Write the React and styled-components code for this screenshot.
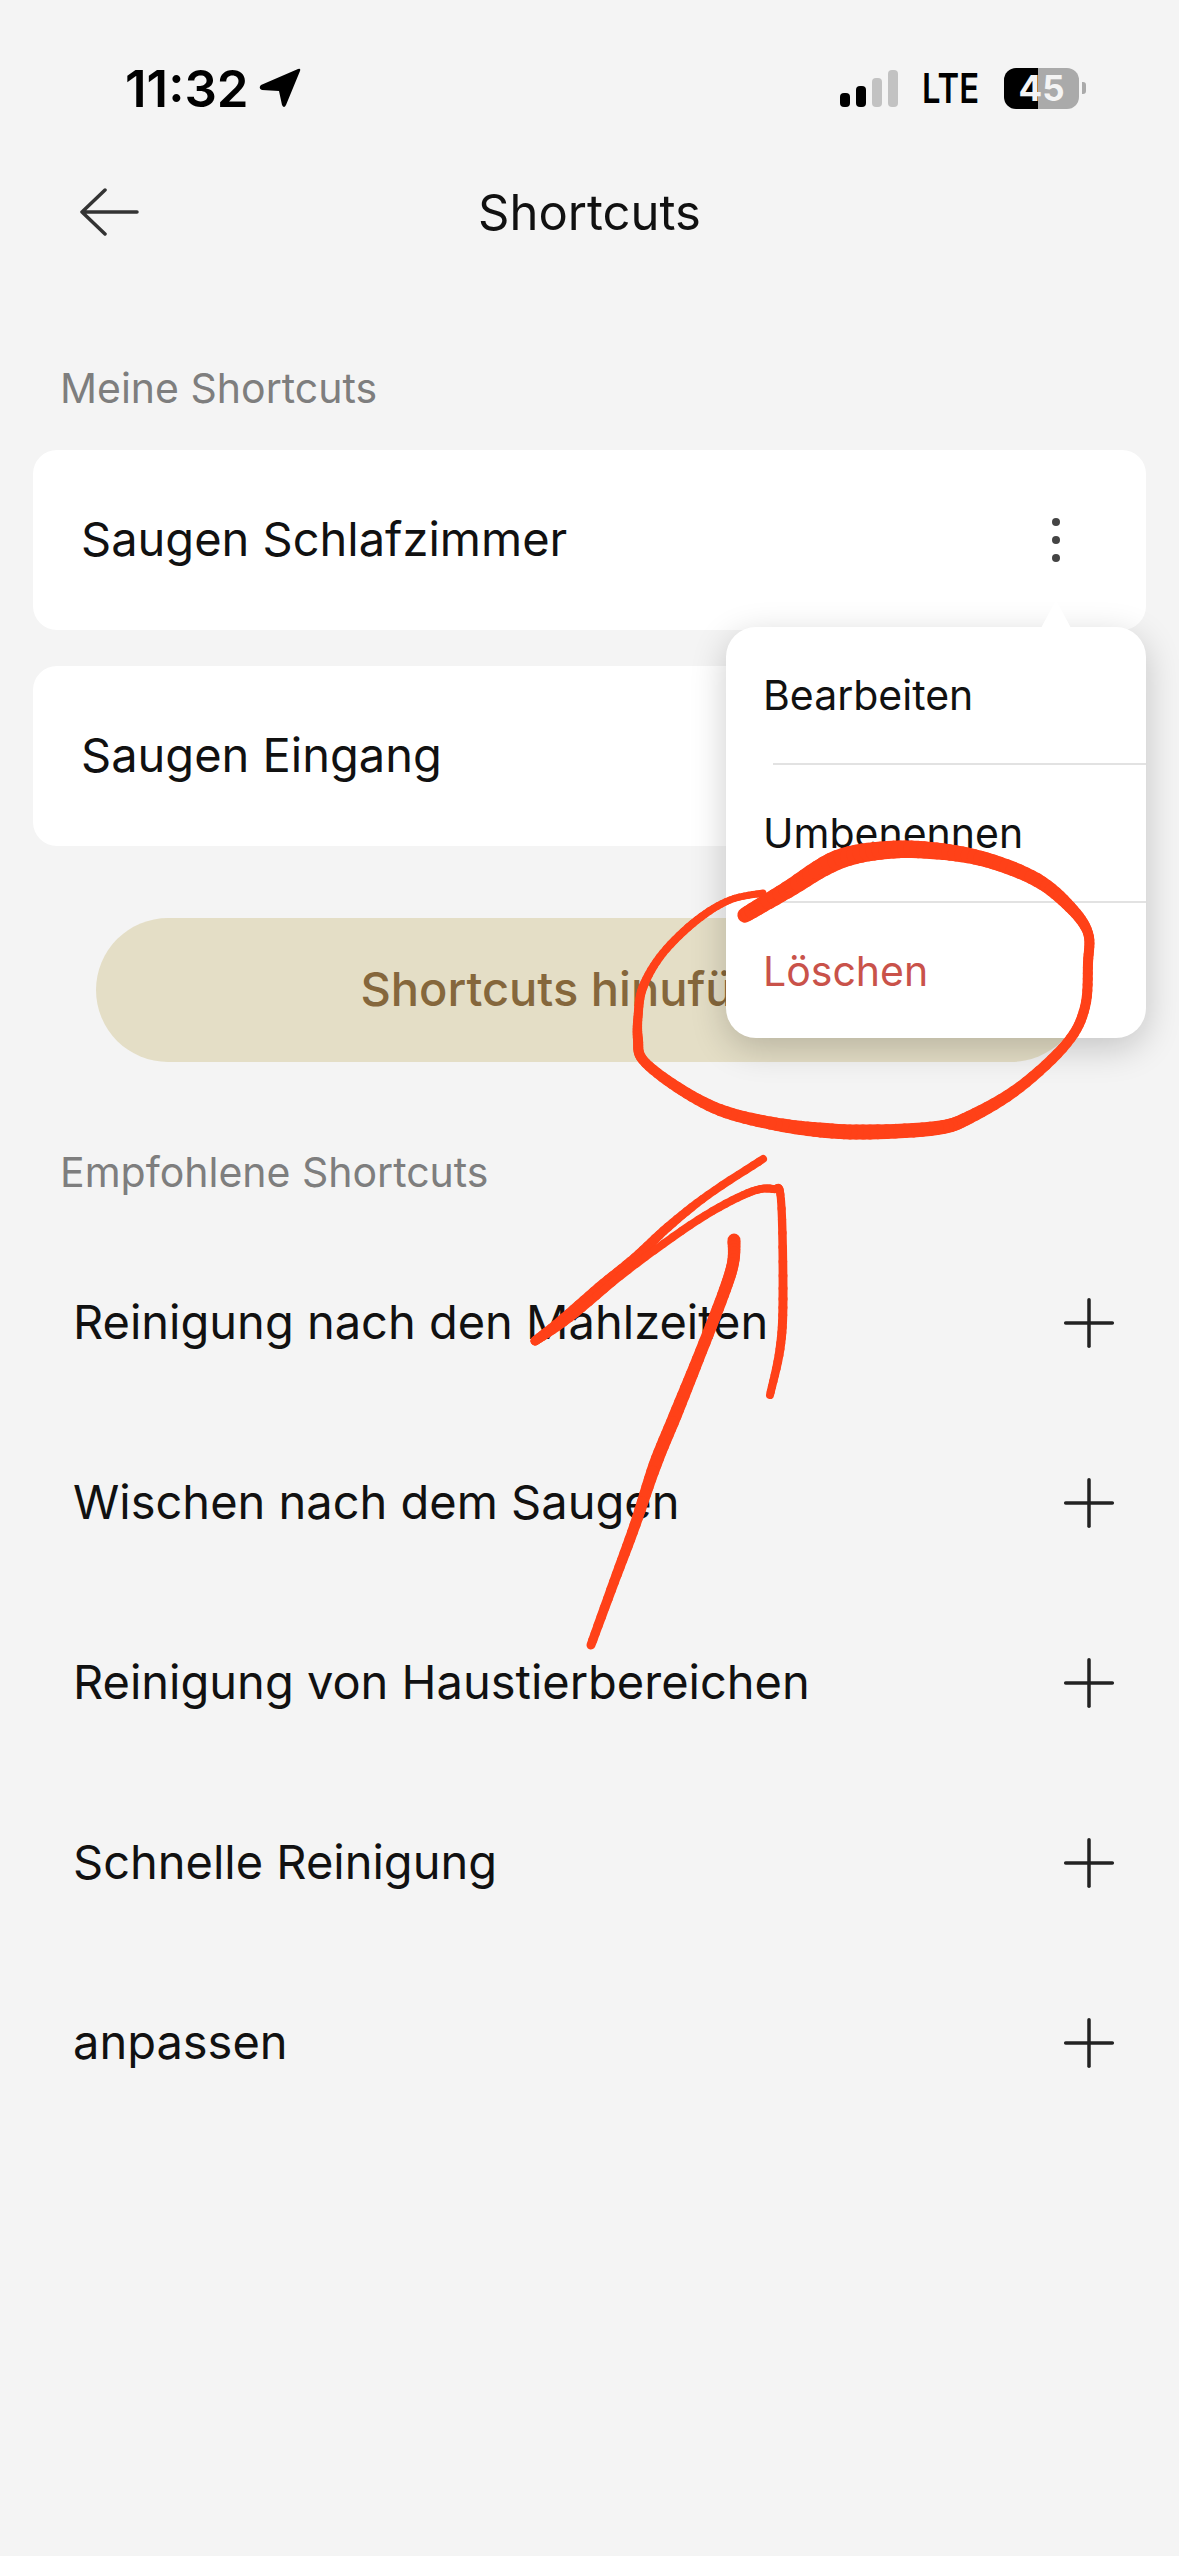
import React from 'react';
import styled, { createGlobalStyle } from 'styled-components';
import { Plus } from 'lucide-react';

const GlobalStyle = createGlobalStyle`
  html, body {
    margin: 0;
    padding: 0;
    background: #f4f4f4;
  }
  * {
    box-sizing: border-box;
  }
`;

const Page = styled.div`
  position: relative;
  width: 1179px;
  height: 2556px;
  overflow: hidden;
  background: #f4f4f4;
  font-family: Inter, 'Noto Sans', sans-serif;
  color: #111;
`;

const StatusBar = styled.div`
  display: flex;
  justify-content: space-between;
  align-items: center;
  height: 88px;
  margin-top: 44px;
  padding: 0 93px 0 125px;
`;

const StatusLeft = styled.div`
  display: flex;
  align-items: center;
  gap: 10px;
`;

const Time = styled.span`
  font-size: 51px;
  font-weight: 600;
  color: #000;
`;

const StatusRight = styled.div`
  display: flex;
  align-items: center;
`;

const Signal = styled.div`
  display: flex;
  align-items: flex-end;
  gap: 6px;
  height: 37px;
  margin-right: 24px;
`;

const SignalBar = styled.span`
  width: 10px;
  height: ${({ $h }) => $h}px;
  border-radius: 4px;
  background: ${({ $on }) => ($on ? '#000' : '#c2c2c2')};
`;

const Lte = styled.span`
  display: inline-block;
  width: 58px;
  margin-right: 24px;
  font-size: 41px;
  font-weight: 600;
  color: #000;
  transform: scaleX(0.8);
  transform-origin: left center;
`;

const Battery = styled.div`
  display: flex;
  align-items: center;
  justify-content: center;
  width: 75px;
  height: 41px;
  border-radius: 12px;
  overflow: hidden;
  background: linear-gradient(90deg, #000 0 34px, #aaa 34px);
  font-size: 35px;
  font-weight: 700;
  color: #f4f4f4;
`;

const BatteryNub = styled.span`
  width: 4px;
  height: 12px;
  margin-left: 3px;
  border-radius: 0 3px 3px 0;
  background: #aaa;
`;

const Header = styled.header`
  display: flex;
  align-items: center;
  justify-content: center;
  position: relative;
  height: 96px;
  margin-top: 32px;
`;

const BackButton = styled.div`
  position: absolute;
  left: 79px;
  top: 24px;
  display: flex;
`;

const Title = styled.h1`
  margin: 0;
  font-size: 49px;
  font-weight: 400;
  color: #111;
`;

const SectionLabel = styled.div`
  height: 50px;
  margin-top: ${({ $top }) => $top || 0}px;
  padding-left: 60px;
  font-size: 41px;
  line-height: 48px;
  color: #7e7e7e;
`;

const Cards = styled.div`
  display: flex;
  flex-direction: column;
  gap: 36px;
  margin: 36px 33px 0;
`;

const Card = styled.div`
  display: flex;
  align-items: center;
  justify-content: space-between;
  height: 180px;
  padding: 0 48px 3px;
  border-radius: 24px;
  background: #fff;
  font-size: 47px;
`;

const Kebab = styled.div`
  display: flex;
  flex-direction: column;
  gap: 10px;
  margin: 3px 38px 0 0;
`;

const KebabDot = styled.span`
  width: 8px;
  height: 8px;
  border-radius: 50%;
  background: #444;
`;

const AddButton = styled.div`
  display: flex;
  align-items: center;
  justify-content: center;
  height: 144px;
  margin: 72px 96px 0;
  padding-bottom: 3px;
  border-radius: 72px;
  background: #e4dec6;
  font-size: 47px;
  font-weight: 500;
  color: #85673c;
`;

const Recommended = styled.div`
  margin-top: 86px;
`;

const RowList = styled.div`
  display: flex;
  flex-direction: column;
  margin-top: 35px;
`;

const Row = styled.div`
  display: flex;
  align-items: center;
  justify-content: space-between;
  height: 180px;
  padding: 0 50px 0 73px;
  font-size: 47px;
  color: #111;
`;

const RowName = styled.span`
  margin-bottom: 3px;
`;

const Menu = styled.div`
  position: absolute;
  top: 627px;
  right: 33px;
  width: 420px;
  height: 411px;
  border-radius: 30px;
  background: #fff;
  box-shadow: 0 10px 36px rgba(0, 0, 0, 0.2);

  &::before {
    content: '';
    position: absolute;
    top: -27px;
    right: 75px;
    border-left: 15px solid transparent;
    border-right: 15px solid transparent;
    border-bottom: 28px solid #fff;
  }
`;

const MenuItem = styled.div`
  display: flex;
  align-items: center;
  height: ${({ $h }) => $h}px;
  padding-left: 37px;
  font-size: 41px;
  color: ${({ $danger }) => ($danger ? '#c9524a' : '#111')};
`;

const MenuDivider = styled.div`
  height: 2px;
  margin-left: 47px;
  background: #e2e2e2;
`;

const Scribble = styled.svg`
  position: absolute;
  top: 0;
  left: 0;
  pointer-events: none;
`;

const recommended = [
  'Reinigung nach den Mahlzeiten',
  'Wischen nach dem Saugen',
  'Reinigung von Haustierbereichen',
  'Schnelle Reinigung',
  'anpassen',
];

// pen strokes as [x, y, width]
const circleStroke = [
  [745, 915, 15], [787, 890, 17], [837, 860, 20], [887, 850, 18], [937, 851, 17],
  [987, 860, 15], [1037, 880, 14], [1070, 907, 12], [1088, 933, 10], [1088, 963, 10],
  [1085, 1007, 10], [1067, 1043, 10], [1020, 1087, 11], [970, 1117, 13], [937, 1128, 14],
  [870, 1132, 15], [820, 1130, 15], [770, 1123, 13], [720, 1110, 12], [677, 1087, 11],
  [643, 1060, 10], [638, 1040, 10], [638, 1017, 9], [643, 987, 9], [663, 953, 8],
  [697, 920, 8], [730, 900, 7], [763, 893, 7],
];

const arrowHead = [
  [763, 1159, 8], [708, 1195, 8], [668, 1227, 9], [635, 1258, 10], [599, 1288, 11],
  [560, 1322, 11], [535, 1341, 9], [570, 1318, 8], [628, 1270, 8], [698, 1220, 8],
  [748, 1193, 8], [773, 1189, 8], [781, 1200, 8], [783, 1299, 9], [780, 1349, 9],
  [770, 1395, 8],
];

const arrowShaft = [
  [734, 1240, 13], [733, 1263, 12], [723, 1295, 12], [698, 1359, 12], [675, 1416, 13],
  [655, 1465, 13], [635, 1525, 11], [614, 1582, 10], [591, 1645, 9],
];

// Catmull-Rom through the points, one short round-capped line per step,
// so that the pen width can change along the stroke
function samplePen(points, steps = 8) {
  const out = [];
  for (let i = 0; i < points.length - 1; i++) {
    const p0 = points[Math.max(i - 1, 0)];
    const p1 = points[i];
    const p2 = points[i + 1];
    const p3 = points[Math.min(i + 2, points.length - 1)];
    for (let s = 0; s < steps; s++) {
      const t = s / steps;
      const at = (k) =>
        0.5 *
        (2 * p1[k] +
          (p2[k] - p0[k]) * t +
          (2 * p0[k] - 5 * p1[k] + 4 * p2[k] - p3[k]) * t * t +
          (3 * p1[k] - p0[k] - 3 * p2[k] + p3[k]) * t * t * t);
      out.push([at(0), at(1), p1[2] + (p2[2] - p1[2]) * t]);
    }
  }
  out.push(points[points.length - 1]);
  return out;
}

function PenStroke({ points }) {
  const samples = samplePen(points);
  return (
    <g stroke="#ff4118" strokeLinecap="round">
      {samples.slice(1).map((p, i) => (
        <line
          key={i}
          x1={samples[i][0]}
          y1={samples[i][1]}
          x2={p[0]}
          y2={p[1]}
          strokeWidth={p[2]}
        />
      ))}
    </g>
  );
}

function App() {
  return (
    <Page>
      <GlobalStyle />
      <StatusBar>
        <StatusLeft>
          <Time>11:32</Time>
          <svg width="42" height="40" viewBox="0 0 42 40">
            <path
              d="M39 1 L2 17 Q-1 20 3 22 L20 23 L23 37 Q25 41 27 37 L41 3 Q42 0 39 1 Z"
              fill="#000"
            />
          </svg>
        </StatusLeft>
        <StatusRight>
          <Signal>
            <SignalBar $h={14} $on />
            <SignalBar $h={21} $on />
            <SignalBar $h={29} />
            <SignalBar $h={37} />
          </Signal>
          <Lte>LTE</Lte>
          <Battery>45</Battery>
          <BatteryNub />
        </StatusRight>
      </StatusBar>
      <Header>
        <BackButton>
          <svg width="60" height="48" viewBox="0 0 60 48">
            <path
              d="M26 2 L3 24 L26 46 M3 24 L58 24"
              fill="none"
              stroke="#333"
              strokeWidth="3.5"
              strokeLinecap="round"
              strokeLinejoin="round"
            />
          </svg>
        </BackButton>
        <Title>Shortcuts</Title>
      </Header>
      <SectionLabel $top={104}>Meine Shortcuts</SectionLabel>
      <Cards>
        <Card>
          Saugen Schlafzimmer
          <Kebab>
            <KebabDot />
            <KebabDot />
            <KebabDot />
          </Kebab>
        </Card>
        <Card>Saugen Eingang</Card>
      </Cards>
      <AddButton>Shortcuts hinufügen</AddButton>
      <Recommended>
        <SectionLabel>Empfohlene Shortcuts</SectionLabel>
        <RowList>
          {recommended.map((name) => (
            <Row key={name}>
              <RowName>{name}</RowName>
              <Plus size={80} strokeWidth={1.05} color="#222" />
            </Row>
          ))}
        </RowList>
      </Recommended>
      <Menu>
        <MenuItem $h={136}>Bearbeiten</MenuItem>
        <MenuDivider />
        <MenuItem $h={136}>Umbenennen</MenuItem>
        <MenuDivider />
        <MenuItem $h={135} $danger>
          Löschen
        </MenuItem>
      </Menu>
      <Scribble width="1179" height="2556" viewBox="0 0 1179 2556" fill="none">
        <PenStroke points={circleStroke} />
        <PenStroke points={arrowHead} />
        <PenStroke points={arrowShaft} />
      </Scribble>
    </Page>
  );
}

export default App;
